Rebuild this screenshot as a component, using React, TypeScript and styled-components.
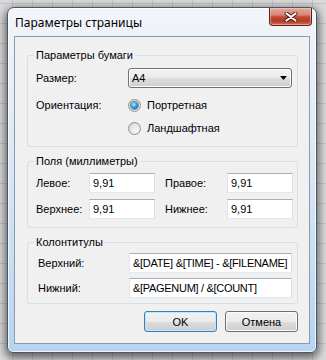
import React from "react";
import styled, { createGlobalStyle } from "styled-components";

const Global = createGlobalStyle`
  html, body { margin: 0; padding: 0; }
  body {
    width: 326px;
    height: 360px;
    overflow: hidden;
    font-family: "Liberation Sans", Arial, sans-serif;
  }
`;

const Desktop = styled.div`
  width: 326px;
  height: 360px;
  box-sizing: border-box;
  padding: 7px 9px 7px 7px;
  background-color: #dadada;
  background-image: linear-gradient(to right, rgba(0, 0, 0, 0.09) 1px, transparent 1px),
    linear-gradient(to bottom, rgba(0, 0, 0, 0.09) 1px, transparent 1px);
  background-size: 20px 20px;
  background-position: 12px 3px;
`;

const Window = styled.div`
  width: 310px;
  height: 346px;
  box-sizing: border-box;
  display: flex;
  flex-direction: column;
  border: 1px solid #46586c;
  border-radius: 7px 7px 6px 6px;
  background: linear-gradient(to bottom, #f2f5f9 0%, #e6edf5 25%, #cadff3 70%, #b6d4f0 100%);
  box-shadow: inset 0 0 0 1px rgba(255, 255, 255, 0.75), 0 3px 9px 2px rgba(0, 0, 0, 0.55);
`;

const TitleBar = styled.div`
  height: 28px;
  flex: none;
  display: flex;
  align-items: flex-start;
  padding-left: 7px;
`;

const Title = styled.div`
  flex: 1;
  align-self: center;
  padding-top: 2px;
  font-family: "Noto Sans", "Liberation Sans", sans-serif;
  font-size: 12px;
  line-height: 16px;
  color: #000;
`;

const CloseButton = styled.div`
  width: 43px;
  height: 18px;
  box-sizing: border-box;
  margin-right: 4px;
  border: 1px solid #5a2219;
  border-top: none;
  border-radius: 0 0 4px 4px;
  background: linear-gradient(
    to bottom,
    #e6a799 0%,
    #d9887a 40%,
    #c24a36 52%,
    #b53a27 78%,
    #d6765c 100%
  );
  box-shadow: inset 0 0 0 1px rgba(255, 220, 210, 0.45);
  display: flex;
  align-items: center;
  justify-content: center;
`;

const Client = styled.div`
  flex: 1;
  margin: 0 6px 8px 6px;
  border: 1px solid #8a9bb0;
  background: #f0f0f0;
  padding: 11px 11px 0 12px;
  display: flex;
  flex-direction: column;
`;

const Group = styled.fieldset<{ $mt: number; $pt: number; $pb: number }>`
  margin: ${(p) => p.$mt}px 0 0 0;
  min-width: 0;
  border: 1px solid #d5dfe5;
  border-radius: 3px;
  padding: ${(p) => p.$pt}px 4px ${(p) => p.$pb}px 8px;
`;

const Legend = styled.legend`
  font-size: 11px;
  line-height: 14px;
  padding: 0 2px;
  margin-left: -2px;
  color: #000;
`;

const Grid = styled.div<{ $cols: string; $gap?: number }>`
  display: grid;
  grid-template-columns: ${(p) => p.$cols};
  row-gap: ${(p) => p.$gap ?? 0}px;
  align-items: center;
`;

const Label = styled.div<{ $indent?: number }>`
  font-size: 11px;
  line-height: 14px;
  color: #000;
  padding-left: ${(p) => p.$indent ?? 0}px;
  white-space: nowrap;
`;

const Row = styled.div<{ $h: number; $mt?: number }>`
  height: ${(p) => p.$h}px;
  margin-top: ${(p) => p.$mt ?? 0}px;
  display: flex;
  align-items: center;
`;

const Select = styled.div`
  height: 20px;
  box-sizing: border-box;
  border: 1px solid #707070;
  border-radius: 3px;
  padding: 0 4px 0 3px;
  background: linear-gradient(to bottom, #f2f2f2 0%, #ebebeb 50%, #dddddd 50%, #cfcfcf 100%);
  box-shadow: inset 0 0 0 1px #fbfbfb;
  display: flex;
  align-items: center;
  justify-content: space-between;
  font-size: 11px;
  color: #000;
`;

const RadioLine = styled.div`
  display: flex;
  align-items: center;
  gap: 6px;
  font-size: 11px;
  color: #000;
`;

const Radio = styled.span<{ $checked?: boolean }>`
  width: 13px;
  height: 13px;
  box-sizing: border-box;
  border-radius: 50%;
  border: 1px solid #8e8f8f;
  background: radial-gradient(circle at 65% 70%, #f8f8f8 0%, #e4e4e4 55%, #c9c9c9 100%);
  display: flex;
  align-items: center;
  justify-content: center;
  &::after {
    content: "";
    display: ${(p) => (p.$checked ? "block" : "none")};
    width: 7px;
    height: 7px;
    border-radius: 50%;
    background: radial-gradient(circle at 40% 35%, #c6ecff 0%, #3ea3e4 40%, #0e5ba3 85%);
    box-shadow: 0 0 0 1px rgba(20, 60, 110, 0.55);
  }
`;

const Input = styled.div<{ $w: number; $tight?: boolean }>`
  width: ${(p) => p.$w}px;
  height: 20px;
  box-sizing: border-box;
  border: 1px solid;
  border-color: #abadb3 #dbdfe6 #e3e9ef #e2e3ea;
  background: #fff;
  padding: 0 2px 0 3px;
  display: flex;
  align-items: center;
  font-size: 11px;
  letter-spacing: ${(p) => (p.$tight ? "-0.3px" : "0")};
  color: #000;
  white-space: nowrap;
  overflow: hidden;
`;

const Buttons = styled.div`
  margin-top: 7px;
  display: flex;
  justify-content: flex-end;
  gap: 8px;
`;

const Button = styled.div<{ $default?: boolean }>`
  width: 73px;
  height: 21px;
  box-sizing: border-box;
  border: 1px solid ${(p) => (p.$default ? "#3c7fb1" : "#707070")};
  border-radius: 3px;
  background: linear-gradient(to bottom, #f2f2f2 0%, #ebebeb 50%, #dddddd 50%, #cfcfcf 100%);
  box-shadow: inset 0 0 0 1px ${(p) => (p.$default ? "#bfe6f9" : "#fbfbfb")};
  display: flex;
  align-items: center;
  justify-content: center;
  font-size: 11px;
  color: #000;
`;

const CloseIcon = () => (
  <svg width="14" height="10" viewBox="0 0 14 10">
    <path d="M2.5 1.5 L11.5 8.5 M11.5 1.5 L2.5 8.5" stroke="#4a1a12" strokeWidth="4" strokeLinecap="round" fill="none" />
    <path d="M2.5 1.5 L11.5 8.5 M11.5 1.5 L2.5 8.5" stroke="#ffffff" strokeWidth="2.2" strokeLinecap="round" fill="none" />
  </svg>
);

const DropArrow = () => (
  <svg width="7" height="4" viewBox="0 0 7 4">
    <polygon points="0,0 7,0 3.5,4" fill="#000" />
  </svg>
);

export default function App() {
  return (
    <>
      <Global />
      <Desktop>
        <Window>
          <TitleBar>
            <Title>Параметры страницы</Title>
            <CloseButton>
              <CloseIcon />
            </CloseButton>
          </TitleBar>
          <Client>
            <Group $mt={0} $pt={6} $pb={9}>
              <Legend>Параметры бумаги</Legend>
              <Grid $cols="92px 164px">
                <Row $h={20}>
                  <Label>Размер:</Label>
                </Row>
                <Select>
                  <span>A4</span>
                  <DropArrow />
                </Select>
                <Row $h={18} $mt={8}>
                  <Label>Ориентация:</Label>
                </Row>
                <Row $h={18} $mt={8}>
                  <RadioLine>
                    <Radio $checked />
                    Портретная
                  </RadioLine>
                </Row>
                <span />
                <Row $h={18} $mt={5}>
                  <RadioLine>
                    <Radio />
                    Ландшафтная
                  </RadioLine>
                </Row>
              </Grid>
            </Group>

            <Group $mt={7} $pt={5} $pb={8}>
              <Legend>Поля (миллиметры)</Legend>
              <Grid $cols="53px 66px 72px 66px" $gap={6}>
                <Label>Левое:</Label>
                <Input $w={66}>9,91</Input>
                <Label $indent={10}>Правое:</Label>
                <Input $w={66}>9,91</Input>
                <Label>Верхнее:</Label>
                <Input $w={66}>9,91</Input>
                <Label $indent={10}>Нижнее:</Label>
                <Input $w={66}>9,91</Input>
              </Grid>
            </Group>

            <Group $mt={7} $pt={4} $pb={5}>
              <Legend>Колонтитулы</Legend>
              <Grid $cols="93px 163px" $gap={5}>
                <Label $indent={2}>Верхний:</Label>
                <Input $w={163} $tight>&amp;[DATE] &amp;[TIME] - &amp;[FILENAME]</Input>
                <Label $indent={2}>Нижний:</Label>
                <Input $w={163} $tight>&amp;[PAGENUM] / &amp;[COUNT]</Input>
              </Grid>
            </Group>

            <Buttons>
              <Button $default>OK</Button>
              <Button>Отмена</Button>
            </Buttons>
          </Client>
        </Window>
      </Desktop>
    </>
  );
}
